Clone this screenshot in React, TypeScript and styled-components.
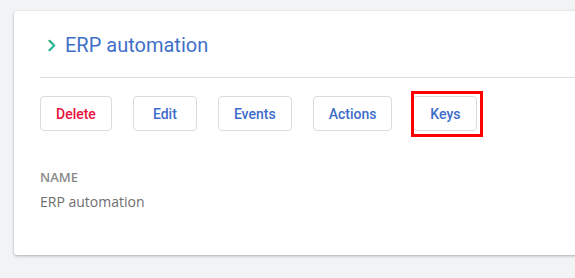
import React from "react";
import styled, { createGlobalStyle } from "styled-components";

const GlobalStyle = createGlobalStyle`
  html, body {
    margin: 0;
    padding: 0;
    background: #f2f3f5;
    overflow: hidden;
  }
  body {
    font-family: Roboto, "Liberation Sans", sans-serif;
  }
`;

const Page = styled.div`
  width: 575px;
  height: 278px;
  padding: 11px 0 0 14px;
  box-sizing: border-box;
  overflow: hidden;
`;

const Card = styled.div`
  width: 600px;
  height: 244px;
  box-sizing: border-box;
  background: #fff;
  border-radius: 3px;
  box-shadow: 0 1px 3px rgba(0, 0, 0, 0.28), 0 0 1px rgba(0, 0, 0, 0.08);
  padding: 0 0 0 26px;
`;

const Header = styled.div`
  display: flex;
  align-items: center;
  gap: 9px;
  padding: 22px 0 20px 8px;
  border-bottom: 1px solid #dedede;
`;

const Title = styled.h2`
  margin: 0;
  font-family: Roboto, "Liberation Sans", sans-serif;
  font-weight: 400;
  font-size: 20px;
  line-height: 24px;
  color: #3f70c8;
`;

const Toolbar = styled.div`
  display: flex;
  gap: 21px;
  margin-top: 18px;
`;

const Button = styled.button<{ $danger?: boolean; $marked?: boolean }>`
  position: relative;
  height: 35px;
  min-width: 64px;
  padding: 0 15px;
  box-sizing: border-box;
  background: #fff;
  border: 1px solid #dcdcdc;
  border-radius: 4px;
  font-family: Roboto, "Liberation Sans", sans-serif;
  font-size: 14px;
  font-weight: 500;
  color: ${(p) => (p.$danger ? "#e8123c" : "#3d6dca")};
  cursor: pointer;

  ${(p) =>
    p.$marked &&
    `
    &::after {
      content: "";
      position: absolute;
      top: -6px;
      left: -3px;
      right: -7px;
      bottom: -7px;
      border: 3px solid #ff0000;
    }
  `}
`;

const Field = styled.div`
  margin-top: 37px;
  display: flex;
  flex-direction: column;
  gap: 6px;
`;

const Label = styled.div`
  font-family: "Open Sans", "Noto Sans", sans-serif;
  font-size: 13px;
  font-weight: 600;
  line-height: 18px;
  color: #8a8a8a;
`;

const Value = styled.div`
  font-family: "Open Sans", "Noto Sans", sans-serif;
  font-size: 14px;
  line-height: 20px;
  color: #6e6e6e;
`;

const Chevron = () => (
  <svg width="8" height="13" viewBox="0 0 8 13">
    <defs>
      <linearGradient id="chev" x1="0" y1="0" x2="1" y2="1">
        <stop offset="0" stopColor="#25ad78" />
        <stop offset="1" stopColor="#2cbcaa" />
      </linearGradient>
    </defs>
    <polyline
      points="1.5,1.8 6.2,6.5 1.5,11.2"
      fill="none"
      stroke="url(#chev)"
      strokeWidth="2.2"
      strokeLinecap="round"
      strokeLinejoin="round"
    />
  </svg>
);

export default function App() {
  const actions = ["Edit", "Events", "Actions"];
  return (
    <>
      <GlobalStyle />
      <Page>
        <Card>
          <Header>
            <Chevron />
            <Title>ERP automation</Title>
          </Header>
          <Toolbar>
            <Button $danger>Delete</Button>
            {actions.map((a) => (
              <Button key={a}>{a}</Button>
            ))}
            <Button $marked>Keys</Button>
          </Toolbar>
          <Field>
            <Label>NAME</Label>
            <Value>ERP automation</Value>
          </Field>
        </Card>
      </Page>
    </>
  );
}
